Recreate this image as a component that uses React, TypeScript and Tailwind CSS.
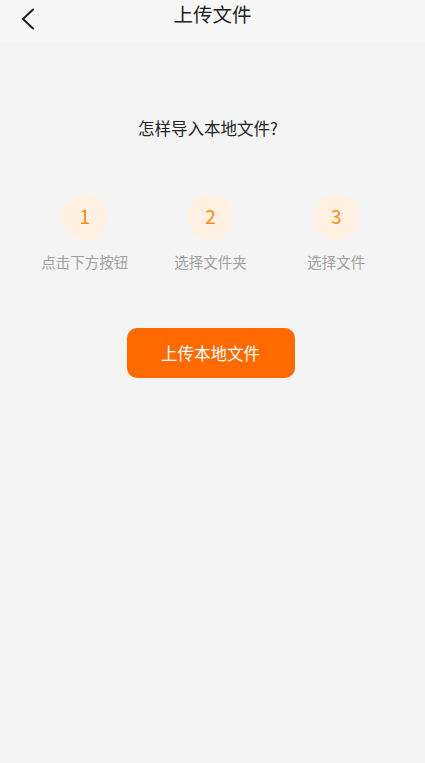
const steps = [
  { n: "1", label: "点击下方按钮" },
  { n: "2", label: "选择文件夹" },
  { n: "3", label: "选择文件" },
];

const font = { fontFamily: '"Noto Sans CJK SC", "Noto Sans", sans-serif' };

export default function App() {
  return (
    <main className="flex min-h-[763px] flex-col bg-[#f4f4f4] text-[#222]" style={font}>
      <header className="relative flex h-[42px] items-center justify-center bg-[#f7f7f7]">
        <button className="absolute left-[16px] top-[4px] p-1">
          <svg width="16" height="22" viewBox="0 0 16 22" fill="none" stroke="#222" strokeWidth="2" strokeLinecap="round">
            <path d="M13 1.5 3 11l10 9.5" />
          </svg>
        </button>
        <h1 className="-mt-[14px] text-[19.5px] leading-none text-[#222]">上传文件</h1>
      </header>

      <section className="flex flex-col items-center">
        <p className="mr-[9px] mt-[78px] text-[16.5px] leading-none text-[#222]">怎样导入本地文件?</p>

        <div className="mt-[57px] grid w-full grid-cols-3 pl-[22px] pr-[26px]">
          {steps.map((s) => (
            <div key={s.n} className="flex flex-col items-center">
              <div className="flex h-[46px] w-[46px] items-center justify-center rounded-full bg-[#fff0e2] text-[19px] text-[#ff8a14]">
                {s.n}
              </div>
              <span className="mt-[15px] text-[14.5px] leading-none text-[#a0a0a0]">{s.label}</span>
            </div>
          ))}
        </div>

        <button className="mr-[4px] mt-[59px] h-[50px] w-[168px] rounded-[10px] bg-[#ff6a00] text-[16.5px] text-white">
          上传本地文件
        </button>
      </section>
    </main>
  );
}
